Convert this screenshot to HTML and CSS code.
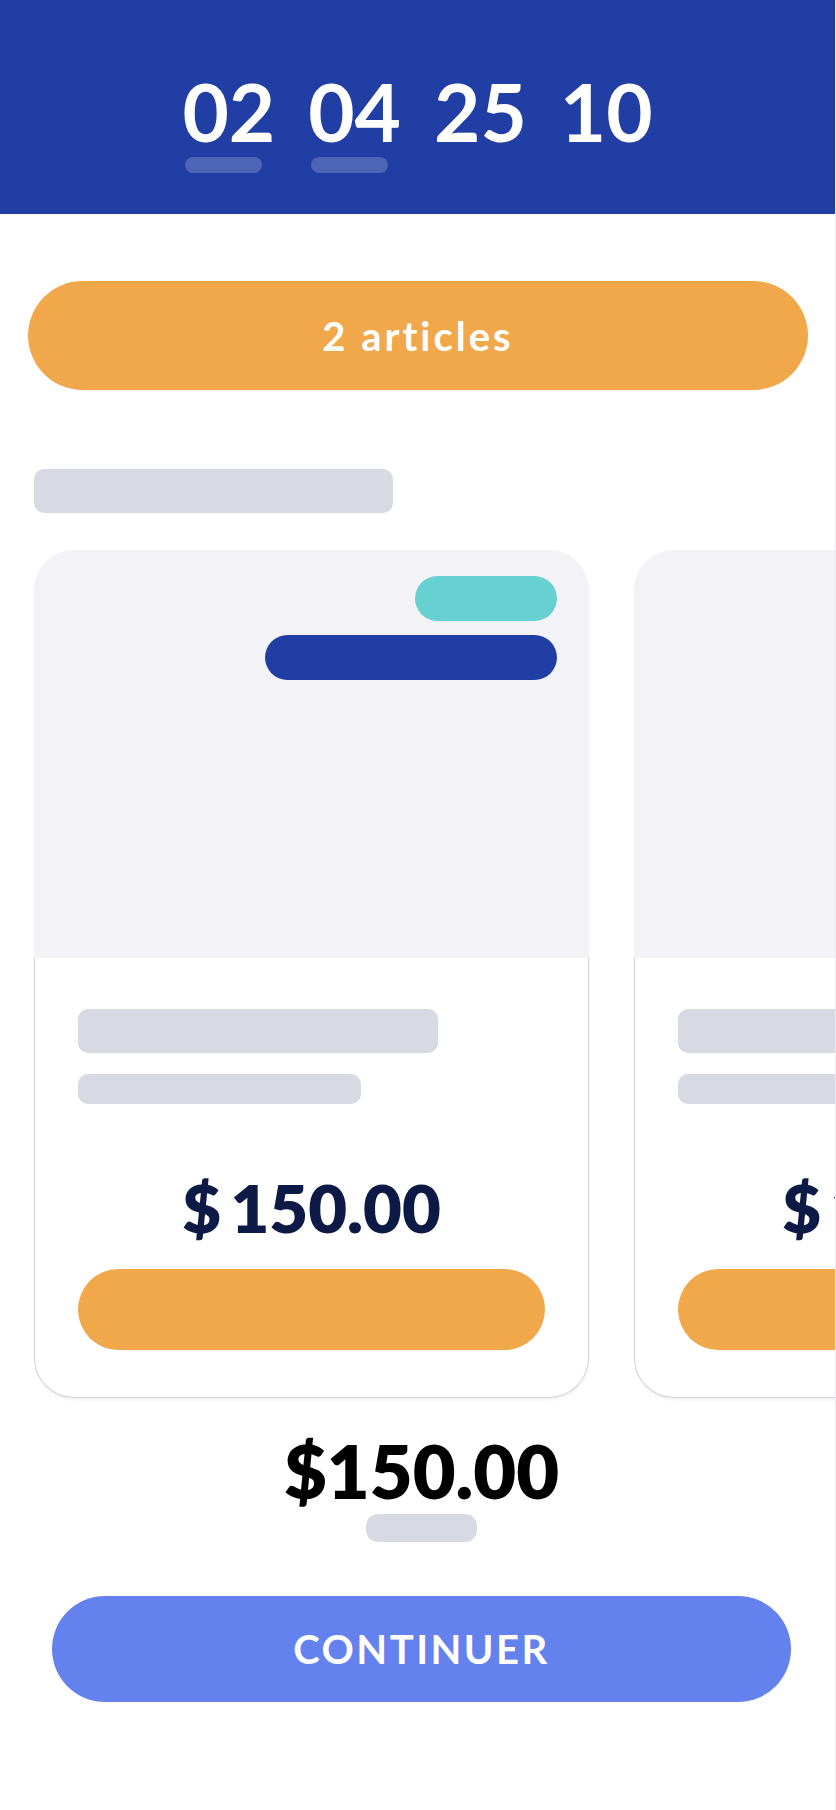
FILE: index.html
```html
<!DOCTYPE html>
<html>
<head>
    <meta charset="UTF-8">
    <title>Panier</title>
    <link rel="stylesheet" href="styles.css">
</head>
<body>
<div class="page">
    <header class="countdown">
        <div class="unit">
            <span class="num">02</span>
            <span class="label"></span>
        </div>
        <div class="unit">
            <span class="num">04</span>
            <span class="label"></span>
        </div>
        <div class="unit">
            <span class="num">25</span>
        </div>
        <div class="unit">
            <span class="num">10</span>
        </div>
    </header>

    <div class="articles-btn">2 articles</div>

    <div class="skeleton section-title"></div>

    <div class="cards">
        <div class="card">
            <div class="card-image">
                <span class="tag tag-teal"></span>
                <span class="tag tag-blue"></span>
            </div>
            <div class="card-body">
                <div class="skeleton line-1"></div>
                <div class="skeleton line-2"></div>
                <div class="card-price">$ 150.00</div>
                <div class="card-btn"></div>
            </div>
        </div>
        <div class="card">
            <div class="card-image">
                <span class="tag tag-teal"></span>
                <span class="tag tag-blue"></span>
            </div>
            <div class="card-body">
                <div class="skeleton line-1"></div>
                <div class="skeleton line-2"></div>
                <div class="card-price">$ 150.00</div>
                <div class="card-btn"></div>
            </div>
        </div>
    </div>

    <div class="summary">
        <div class="total">$150.00</div>
        <div class="skeleton total-label"></div>
        <div class="continue-btn">CONTINUER</div>
    </div>
</div>
</body>
</html>
```

FILE: styles.css
```css
body {
    margin: 0;
    font-family: "Lato", "Open Sans", Arial, sans-serif;
    background: #fff;
}

.page {
    width: 835px;
    min-height: 1810px;
    border-right: 1px solid #ececf0;
    overflow: hidden;
}

.countdown {
    background: #213ea5;
    display: flex;
    justify-content: center;
    gap: 33px;
    padding: 71px 0 41px;
}

.unit {
    display: flex;
    flex-direction: column;
    align-items: flex-start;
}

.num {
    color: #fff;
    font-size: 80px;
    font-weight: 700;
    line-height: 80px;
}

.label {
    width: 77px;
    height: 16px;
    margin: 6px 0 0 3px;
    border-radius: 8px;
    background: rgba(255, 255, 255, 0.2);
}

.articles-btn {
    margin: 67px 27px 0 28px;
    height: 109px;
    border-radius: 55px;
    background: #f1a84a;
    color: #fff;
    font-size: 40px;
    font-weight: 700;
    letter-spacing: 3px;
    display: flex;
    align-items: center;
    justify-content: center;
}

.skeleton {
    background: #d7dae3;
    border-radius: 10px;
}

.section-title {
    width: 359px;
    height: 44px;
    margin: 79px 0 0 34px;
}

.cards {
    display: flex;
    gap: 45px;
    padding: 37px 0 0 34px;
}

.card {
    flex: 0 0 555px;
}

.card-image {
    height: 408px;
    background: #f2f2f7;
    border-radius: 40px 40px 0 0;
    padding: 26px 32px 0 0;
    box-sizing: border-box;
    display: flex;
    flex-direction: column;
    align-items: flex-end;
    gap: 14px;
}

.tag {
    height: 45px;
    border-radius: 23px;
}

.tag-teal {
    width: 142px;
    background: #67d1d1;
}

.tag-blue {
    width: 292px;
    background: #213ea5;
}

.card-body {
    border: 1px solid #cfd2db;
    border-top: none;
    border-radius: 0 0 40px 40px;
    padding: 51px 43px 47px;
    box-shadow: 0 2px 3px rgba(0, 0, 0, 0.06);
}

.line-1 {
    width: 360px;
    height: 44px;
}

.line-2 {
    width: 283px;
    height: 30px;
    margin-top: 21px;
}

.card-price {
    margin-top: 70px;
    text-align: center;
    color: #0d1a45;
    font-size: 67px;
    font-weight: 800;
    line-height: 67px;
    word-spacing: -6px;
}

.card-btn {
    margin-top: 28px;
    height: 81px;
    border-radius: 41px;
    background: #f1a84a;
}

.summary {
    padding: 36px 44px 0 52px;
    display: flex;
    flex-direction: column;
    align-items: center;
}

.total {
    color: #000;
    font-size: 74px;
    font-weight: 800;
    line-height: 74px;
}

.total-label {
    width: 111px;
    height: 28px;
    margin-top: 6px;
    border-radius: 12px;
}

.continue-btn {
    align-self: stretch;
    margin-top: 54px;
    height: 106px;
    border-radius: 53px;
    background: #6482ee;
    color: #fff;
    font-size: 40px;
    font-weight: 700;
    letter-spacing: 2.5px;
    display: flex;
    align-items: center;
    justify-content: center;
}
```
